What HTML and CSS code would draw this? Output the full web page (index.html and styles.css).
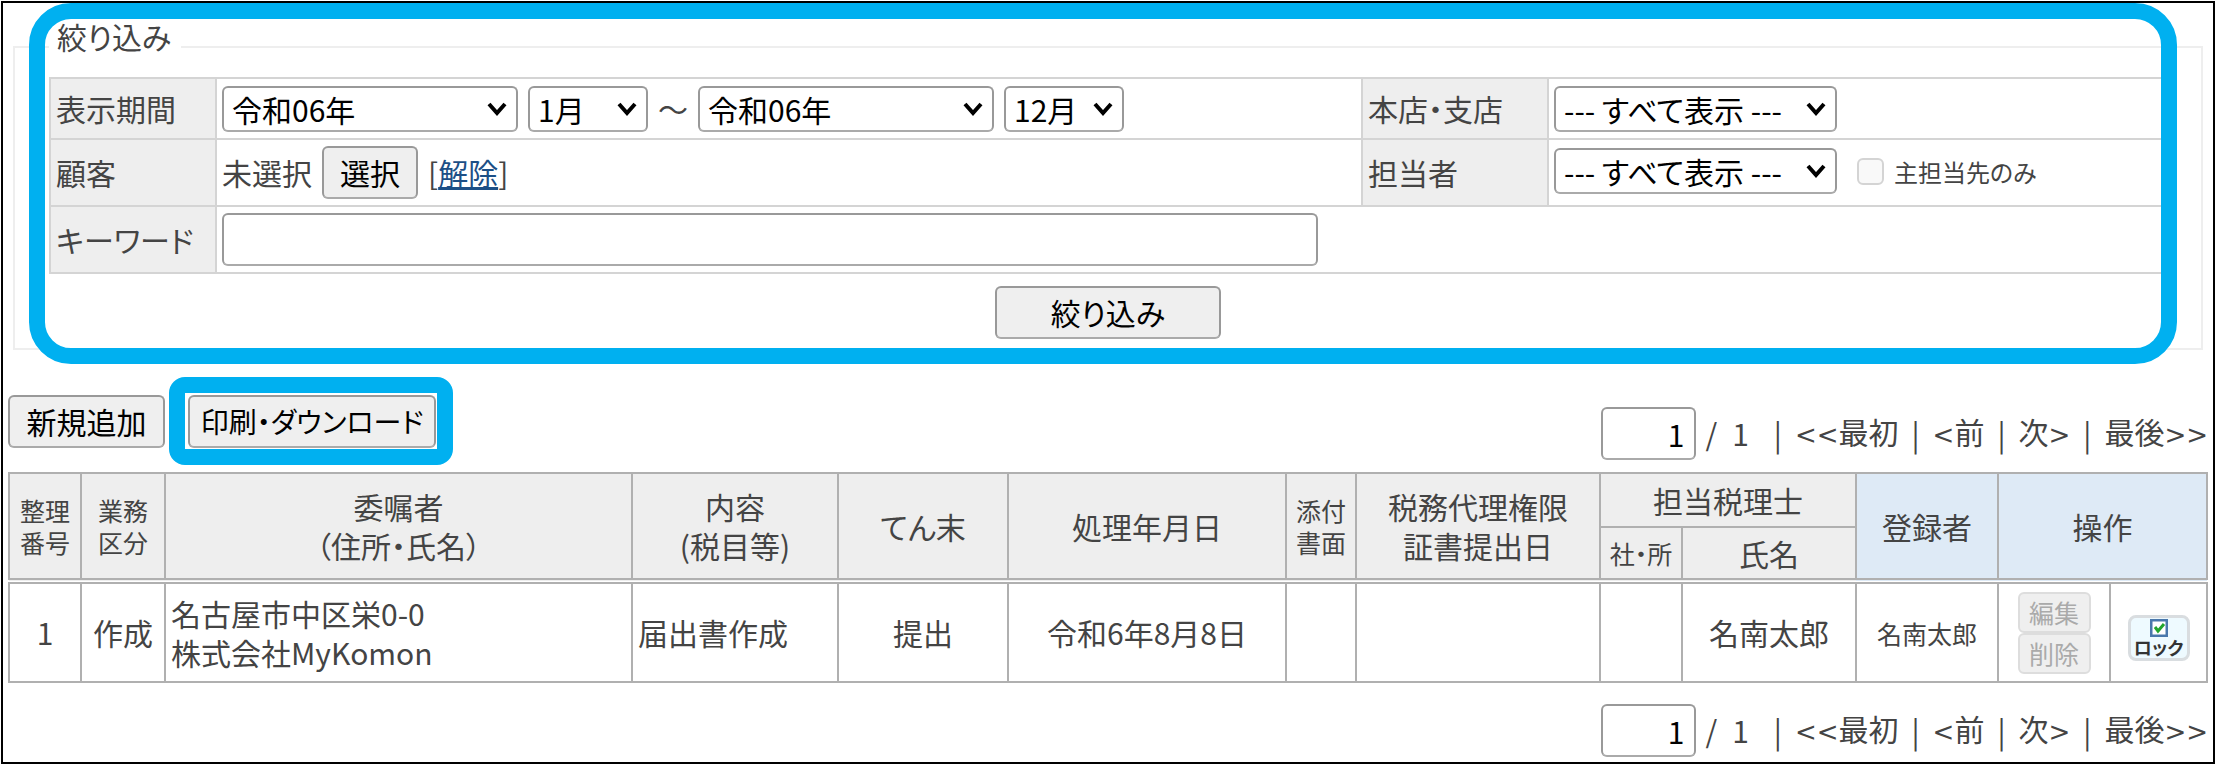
FILE: index.html
```html
<!DOCTYPE html>
<html lang="ja">

<head>
    <meta charset="UTF-8">
    <meta name="viewport" content="width=device-width, initial-scale=1.0">
    <title>業務一覧</title>
    <link rel="stylesheet" href="styles.css">
</head>

<body>
    <section class="filter">
        <fieldset>
            <legend>絞り込み</legend>
            <table class="filterTable">
                <colgroup>
                    <col class="colLabel">
                    <col>
                    <col class="colLabelRight">
                    <col class="colRight">
                </colgroup>
                <tr>
                    <th>表示期間</th>
                    <td>
                        <div class="fields">
                            <select class="year" aria-label="開始年"><option>令和06年</option></select>
                            <select class="month" aria-label="開始月"><option>1月</option></select>
                            <span class="wave">～</span>
                            <select class="year" aria-label="終了年"><option>令和06年</option></select>
                            <select class="month" aria-label="終了月"><option>12月</option></select>
                        </div>
                    </td>
                    <th><label for="branch">本店・支店</label></th>
                    <td><div class="fields"><select class="all" id="branch"><option>--- すべて表示 ---</option></select></div></td>
                </tr>
                <tr>
                    <th>顧客</th>
                    <td>
                        <div class="fields">
                            <span>未選択</span>
                            <button type="button" class="choose">選択</button>
                            <span class="clear">[<a href="#">解除</a>]</span>
                        </div>
                    </td>
                    <th><label for="staff">担当者</label></th>
                    <td class="staff">
                        <div class="fields">
                            <select class="all" id="staff"><option>--- すべて表示 ---</option></select>
                            <label class="mainOnly"><input type="checkbox" disabled>主担当先のみ</label>
                        </div>
                    </td>
                </tr>
                <tr>
                    <th><label for="keyword">キーワード</label></th>
                    <td colspan="3"><div class="fields"><input type="text" class="keyword" id="keyword"></div></td>
                </tr>
            </table>
            <button type="button" class="submit">絞り込み</button>
        </fieldset>
    </section>

    <div class="toolbar">
        <button type="button" class="add">新規追加</button>
        <span class="highlight"><button type="button" class="print">印刷・ダウンロード</button></span>
        <div class="pager">
            <input type="text" value="1" aria-label="ページ">
            <span class="count">/&ensp;1</span>
            <span>|</span>
            <span><span class="arrow">&lt;&lt;</span>最初</span>
            <span>|</span>
            <span><span class="arrow">&lt;</span>前</span>
            <span>|</span>
            <span>次<span class="arrow">&gt;</span></span>
            <span>|</span>
            <span>最後<span class="arrow">&gt;&gt;</span></span>
        </div>
    </div>

    <table class="list">
        <colgroup>
            <col class="colNo">
            <col class="colKind">
            <col>
            <col class="colContent">
            <col class="colResult">
            <col class="colDate">
            <col class="colAttach">
            <col class="colProxy">
            <col class="colOffice">
            <col class="colName">
            <col class="colUser">
            <col class="colEdit">
            <col class="colLock">
        </colgroup>
        <thead>
            <tr>
                <th rowspan="2" class="small">整理<br>番号</th>
                <th rowspan="2" class="small">業務<br>区分</th>
                <th rowspan="2">委嘱者<br>（住所・氏名）</th>
                <th rowspan="2">内容<br>(税目等)</th>
                <th rowspan="2">てん末</th>
                <th rowspan="2">処理年月日</th>
                <th rowspan="2" class="small">添付<br>書面</th>
                <th rowspan="2">税務代理権限<br>証書提出日</th>
                <th colspan="2">担当税理士</th>
                <th rowspan="2" class="blue">登録者</th>
                <th rowspan="2" colspan="2" class="blue">操作</th>
            </tr>
            <tr>
                <th class="small">社・所</th>
                <th>氏名</th>
            </tr>
        </thead>
        <tbody>
            <tr>
                <td>1</td>
                <td>作成</td>
                <td class="left">名古屋市中区栄0-0<br>株式会社MyKomon</td>
                <td class="left">届出書作成</td>
                <td>提出</td>
                <td>令和6年8月8日</td>
                <td></td>
                <td></td>
                <td></td>
                <td>名南太郎</td>
                <td class="small">名南太郎</td>
                <td>
                    <div class="ops">
                        <button type="button" disabled>編集</button>
                        <button type="button" disabled>削除</button>
                    </div>
                </td>
                <td>
                    <button type="button" class="lock">
                        <svg width="18" height="18" viewBox="0 0 18 18">
                            <rect x="1" y="1" width="16" height="16" fill="#fff" stroke="#4a78ac" stroke-width="3" />
                            <path d="M5 8l3 4 6-7" fill="none" stroke="#23a52c" stroke-width="3" />
                        </svg>
                        ロック
                    </button>
                </td>
            </tr>
        </tbody>
    </table>

    <div class="pager bottom">
        <input type="text" value="1" aria-label="ページ">
        <span class="count">/&ensp;1</span>
        <span>|</span>
        <span><span class="arrow">&lt;&lt;</span>最初</span>
        <span>|</span>
        <span><span class="arrow">&lt;</span>前</span>
        <span>|</span>
        <span>次<span class="arrow">&gt;</span></span>
        <span>|</span>
        <span>最後<span class="arrow">&gt;&gt;</span></span>
    </div>
</body>

</html>
```
FILE: styles.css
```css
* {
    box-sizing: border-box;
}

body {
    margin: 1px;
    min-height: calc(100vh - 2px);
    border: 2px solid #000;
    background-color: #fff;
    color: #444;
    font-family: "Noto Sans CJK JP", sans-serif;
    font-feature-settings: "palt";
    font-size: 30px;
    line-height: 39px;
}

button,
input,
select {
    margin: 0;
    font: inherit;
    font-feature-settings: inherit;
    color: #000;
    border: 2px solid #999;
    border-bottom-color: #aaa;
    border-radius: 6px;
}

button {
    height: 53px;
    padding: 0;
    background-color: #efefef;
}

button:disabled {
    color: #aaa;
    border-color: #ddd;
}

select {
    appearance: none;
    height: 46px;
    padding: 0 8px;
    line-height: 40px;
    background: #fff url("data:image/svg+xml,%3Csvg xmlns='http://www.w3.org/2000/svg' width='20' height='14'%3E%3Cpath d='M2 2l8 9 8-9' fill='none' stroke='%23000' stroke-width='4'/%3E%3C/svg%3E") no-repeat right 9px center;
}

th {
    font-weight: normal;
}

/* filter */
.filter {
    position: relative;
    padding: 18px 10px 14px;
}

.filter::after {
    content: "";
    position: absolute;
    top: 0;
    bottom: 0;
    left: 26px;
    right: 36px;
    border: 16px solid #00b0f0;
    border-radius: 42px;
    pointer-events: none;
}

fieldset {
    margin: 0;
    padding: 4px 34px 9px;
    border: 2px solid #eee;
}

legend {
    padding: 0 10px 22px 8px;
    line-height: 30px;
}

.filterTable {
    width: 100%;
    border-collapse: collapse;
    table-layout: fixed;
}

.filterTable th,
.filterTable td {
    height: 67px;
    padding: 0 5px;
    border: 2px solid #d4d4d4;
    text-align: left;
}

.filterTable tr:first-child th,
.filterTable tr:first-child td {
    height: 61px;
}

.filterTable td {
    border-right: none;
}

.filterTable th {
    background-color: #eee;
}

.colLabel {
    width: 166px;
}

.colLabelRight {
    width: 186px;
}

.colRight {
    width: 619px;
}

.fields {
    display: flex;
    align-items: center;
    gap: 10px;
}

.year {
    width: 296px;
}

.month {
    width: 120px;
}

.wave {
    width: 30px;
    text-align: center;
}

.all {
    width: 283px;
}

.choose {
    width: 96px;
}

.clear a {
    color: #1c4f86;
}

.staff {
    vertical-align: top;
}

.staff .fields {
    padding-top: 8px;
}

.mainOnly {
    display: flex;
    align-items: center;
    gap: 10px;
    margin-left: 10px;
    font-size: 24px;
}

.mainOnly input {
    appearance: none;
    width: 27px;
    height: 27px;
    border-color: #d4d4d4;
    background-color: #f9f9f9;
}

.keyword {
    width: 1096px;
    height: 53px;
}

.submit {
    display: block;
    width: 226px;
    margin: 12px auto 0;
}

/* toolbar and pager */
.toolbar {
    display: flex;
    align-items: flex-start;
    padding: 13px 5px 7px;
}

.add {
    width: 157px;
    margin: 18px 4px 0 0;
}

.highlight {
    display: flex;
    padding: 2px 1px 1px 3px;
    border: 16px solid #00b0f0;
    border-radius: 16px;
}

.print {
    width: 248px;
    font-size: 28px;
}

.pager {
    display: flex;
    align-items: center;
    justify-content: flex-end;
    gap: 13px;
    margin: 30px 0 0 auto;
}

.pager input {
    width: 95px;
    height: 53px;
    padding: 0 10px;
    text-align: right;
}

.count {
    margin: 0 12px 0 -4px;
}

.arrow {
    font-family: "DejaVu Sans", sans-serif;
    font-size: 26px;
}

.bottom {
    margin: 21px 5px 0;
}

/* list */
.list {
    width: calc(100% - 10px);
    margin: 0 5px;
    border-collapse: collapse;
    table-layout: fixed;
}

.list th,
.list td {
    padding: 0 5px;
    border: 2px solid #b0b0b0;
    text-align: center;
}

.list th {
    height: 54px;
    padding: 0;
    background-color: #eee;
}

.list thead {
    border-bottom: 6px double #b0b0b0;
}

.list td {
    height: 101px;
}

.list .blue {
    background-color: #deeaf6;
}

.list .left {
    text-align: left;
}

.list .small {
    padding: 0;
    font-size: 25px;
    line-height: 32px;
}

.colNo {
    width: 72px;
}

.colKind {
    width: 84px;
}

.colContent {
    width: 206px;
}

.colResult {
    width: 170px;
}

.colDate {
    width: 278px;
}

.colAttach {
    width: 70px;
}

.colProxy {
    width: 244px;
}

.colOffice {
    width: 82px;
}

.colName {
    width: 174px;
}

.colUser {
    width: 142px;
}

.colEdit {
    width: 112px;
}

.colLock {
    width: 97px;
}

.ops {
    display: flex;
    flex-direction: column;
    align-items: center;
}

.ops button {
    width: 73px;
    height: 41px;
    font-size: 25px;
    line-height: 30px;
}

.lock {
    display: inline-flex;
    flex-direction: column;
    align-items: center;
    justify-content: center;
    width: 62px;
    height: 46px;
    border: 3px solid #d9dde0;
    border-radius: 8px;
    background-color: #eefaff;
    color: #333;
    font-size: 18px;
    font-weight: bold;
    line-height: 20px;
}
```
